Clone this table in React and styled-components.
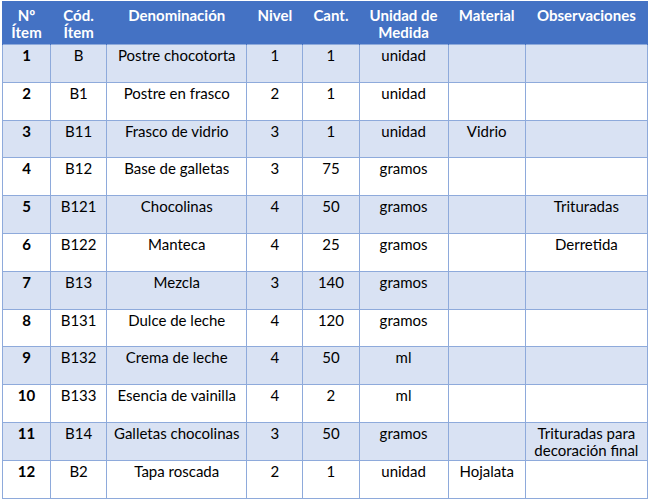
import React from "react";
import styled, {createGlobalStyle} from "styled-components";

const GlobalStyle = createGlobalStyle`
    body {
        margin: 0;
        background: #ffffff;
        font-family: Lato, "Open Sans", sans-serif;
    }
`;

const columns = [
    {label: ["Nº", "Ítem"], width: 48},
    {label: ["Cód.", "Ítem"], width: 56},
    {label: ["Denominación"], width: 140},
    {label: ["Nivel"], width: 56},
    {label: ["Cant."], width: 56},
    {label: ["Unidad de", "Medida"], width: 89},
    {label: ["Material"], width: 77},
    {label: ["Observaciones"], width: 122},
];

const rows = [
    ["1", "B", "Postre chocotorta", "1", "1", "unidad", "", ""],
    ["2", "B1", "Postre en frasco", "2", "1", "unidad", "", ""],
    ["3", "B11", "Frasco de vidrio", "3", "1", "unidad", "Vidrio", ""],
    ["4", "B12", "Base de galletas", "3", "75", "gramos", "", ""],
    ["5", "B121", "Chocolinas", "4", "50", "gramos", "", "Trituradas"],
    ["6", "B122", "Manteca", "4", "25", "gramos", "", "Derretida"],
    ["7", "B13", "Mezcla", "3", "140", "gramos", "", ""],
    ["8", "B131", "Dulce de leche", "4", "120", "gramos", "", ""],
    ["9", "B132", "Crema de leche", "4", "50", "ml", "", ""],
    ["10", "B133", "Esencia de vainilla", "4", "2", "ml", "", ""],
    ["11", "B14", "Galletas chocolinas", "3", "50", "gramos", "", ["Trituradas para", "decoración final"]],
    ["12", "B2", "Tapa roscada", "2", "1", "unidad", "Hojalata", ""],
];

function App() {
    return (
        <Page>
            <GlobalStyle/>
            <Table>
                <colgroup>
                    {columns.map((c, i) => <col key={i} style={{width: c.width}}/>)}
                </colgroup>
                <thead>
                    <tr>
                        {columns.map((c, i) => (
                            <HeadCell key={i}>
                                {c.label.map((line, j) => <div key={j}>{line}</div>)}
                            </HeadCell>
                        ))}
                    </tr>
                </thead>
                <tbody>
                    {rows.map((row, r) => (
                        <Row key={r} shaded={r % 2 === 0}>
                            {row.map((cell, c) => (
                                <Cell key={c} bold={c === 0}>
                                    {Array.isArray(cell)
                                        ? cell.map((line, j) => <Line key={j}>{line}</Line>)
                                        : cell}
                                </Cell>
                            ))}
                        </Row>
                    ))}
                </tbody>
            </Table>
        </Page>
    )
}

const Page = styled.div`
    padding: 1px 0 0 2px;
`;

const Table = styled.table`
    border-collapse: collapse;
    table-layout: fixed;
    width: 646px;
    font-size: 15px;
    color: #000000;
`;

const HeadCell = styled.th`
    background: #4472C4;
    color: #ffffff;
    font-weight: 700;
    height: 43px;
    padding: 5px 1px 0;
    line-height: 17px;
    vertical-align: top;
    text-align: center;
    white-space: nowrap;
    border: 1px solid #4472C4;
    border-bottom: none;
    box-sizing: border-box;
`;

const Row = styled.tr`
    height: 37.8px;
    background: ${props => props.shaded ? '#D9E2F3' : '#ffffff'};
`;

const Cell = styled.td`
    border: 1px solid #8EAADB;
    padding: 2px 1px 0;
    line-height: 17px;
    vertical-align: top;
    text-align: center;
    white-space: nowrap;
    font-weight: ${props => props.bold ? 700 : 400};
    box-sizing: border-box;
`;

const Line = styled.div`
    white-space: nowrap;
`;

export default App
